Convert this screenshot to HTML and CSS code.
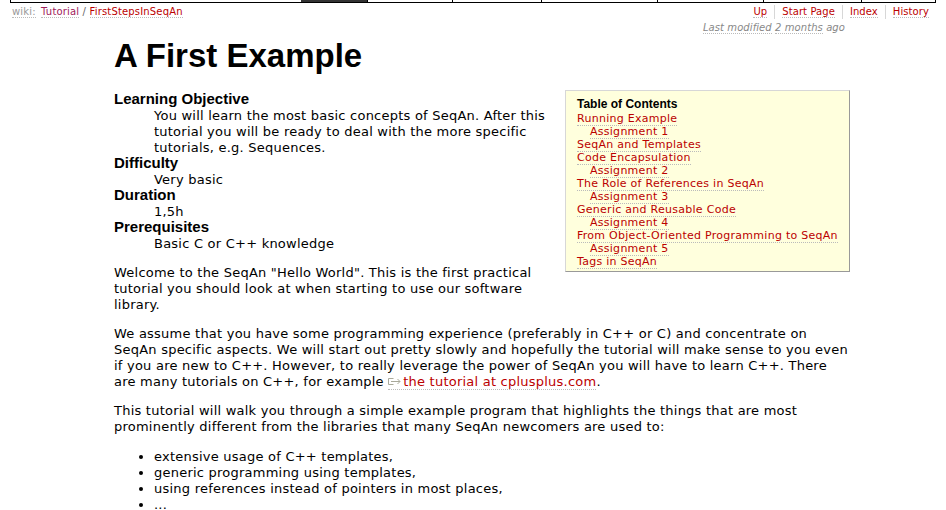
FILE: index.html
```html
<!DOCTYPE html>
<html lang="en">
<head>
    <meta charset="UTF-8">
    <meta name="viewport" content="width=device-width, initial-scale=1.0">
    <title>A First Example</title>
    <link rel="stylesheet" href="styles.css">
</head>
<body>
    <div class="mainnav">
        <span class="tab tab1"></span>
        <span class="tab tab2 active"></span>
        <span class="tab tab3"></span>
        <span class="tab tab4"></span>
        <span class="tab tab5"></span>
        <span class="tab tab6"></span>
        <span class="tab tab7"></span>
    </div>
    <div class="ctxbar">
        <div class="crumbs">
            <a class="wikilabel" href="#">wiki:</a>
            <a href="#" class="purple">Tutorial</a> <span class="slash">/</span>
            <a href="#">FirstStepsInSeqAn</a>
        </div>
        <div class="ctxright">
            <ul class="ctxnav">
                <li><a href="#">Up</a></li>
                <li><a href="#">Start Page</a></li>
                <li><a href="#">Index</a></li>
                <li><a href="#">History</a></li>
            </ul>
            <p class="modified"><a href="#">Last modified</a> <a href="#">2 months</a> ago</p>
        </div>
    </div>
    <div class="content">
        <h1>A First Example</h1>
        <div class="toc">
            <h4>Table of Contents</h4>
            <ol>
                <li><a href="#">Running Example</a></li>
                <li class="sub"><a href="#">Assignment 1</a></li>
                <li><a href="#">SeqAn and Templates</a></li>
                <li><a href="#">Code Encapsulation</a></li>
                <li class="sub"><a href="#">Assignment 2</a></li>
                <li><a href="#">The Role of References in SeqAn</a></li>
                <li class="sub"><a href="#">Assignment 3</a></li>
                <li><a href="#">Generic and Reusable Code</a></li>
                <li class="sub"><a href="#">Assignment 4</a></li>
                <li><a href="#">From Object-Oriented Programming to SeqAn</a></li>
                <li class="sub"><a href="#">Assignment 5</a></li>
                <li><a href="#">Tags in SeqAn</a></li>
            </ol>
        </div>
        <dl>
            <dt>Learning Objective</dt>
            <dd>You will learn the most basic concepts of SeqAn. After this tutorial you will be ready to deal with the more specific tutorials, e.g. Sequences.</dd>
            <dt>Difficulty</dt>
            <dd>Very basic</dd>
            <dt>Duration</dt>
            <dd>1,5h</dd>
            <dt>Prerequisites</dt>
            <dd>Basic C or C++ knowledge</dd>
        </dl>
        <p>Welcome to the SeqAn "Hello World". This is the first practical tutorial you should look at when starting to use our software library.</p>
        <p>We assume that you have some programming experience (preferably in C++ or C) and concentrate on SeqAn specific aspects. We will start out pretty slowly and hopefully the tutorial will make sense to you even if you are new to C++. However, to really leverage the power of SeqAn you will have to learn C++. There are many tutorials on C++, for example <a class="ext" href="#"><svg class="exticon" width="14" height="9" viewBox="0 0 14 9"><path d="M5.500 1.500H.5v6h5M3 4.500h9M9.500 2l2.500 2.500L9.500 7" fill="none" stroke="#a9a99a"/></svg>the tutorial at cplusplus.com</a>.</p>
        <p>This tutorial will walk you through a simple example program that highlights the things that are most prominently different from the libraries that many SeqAn newcomers are used to:</p>
        <ul class="points">
            <li>extensive usage of C++ templates,</li>
            <li>generic programming using templates,</li>
            <li>using references instead of pointers in most places,</li>
            <li>...</li>
        </ul>
    </div>
</body>
</html>
```

FILE: styles.css
```css
html {
    overflow: hidden;
}
body {
    font-family: "DejaVu Sans", Verdana, sans-serif;
    font-size: 13px;
    letter-spacing: 0.23px;
    line-height: 16px;
    color: #000;
    background-color: #fff;
    margin: 0;
}
a {
    color: #b00;
    text-decoration: none;
    border-bottom: 1px dotted #bbb;
}
.mainnav {
    display: flex;
    height: 2px;
    margin: 0 10px;
    border-left: 1px solid #000;
    border-right: 1px solid #000;
    border-bottom: 1px solid #000;
}
.tab {
    border-right: 1px solid #000;
}
.tab1 { width: 290px; border-right: 0; }
.tab2 { width: 66px; background-color: #333; }
.tab3 { width: 84px; }
.tab4 { width: 88px; }
.tab5 { width: 115px; }
.tab6 { width: 105px; }
.tab7 { width: 97px; }
.ctxbar {
    display: flex;
    justify-content: space-between;
    margin: 0 17px 0 12px;
    font-size: 10px;
    letter-spacing: 0.17px;
    line-height: 14px;
}
.crumbs {
    padding-top: 2px;
}
.wikilabel {
    color: #999;
    margin-right: 2px;
}
.purple {
    color: #a0205a;
}
.slash {
    color: #666;
}
.ctxright {
    text-align: right;
    letter-spacing: 0.08px;
}
.ctxnav {
    display: flex;
    justify-content: flex-end;
    list-style: none;
    margin: 0;
    padding: 2px 0 0;
}
.ctxnav li {
    padding: 0 7px;
    border-left: 1px solid #d7d7d7;
}
.ctxnav li:first-child {
    border-left: 0;
}
.ctxnav li:last-child {
    padding-right: 0;
}
.modified {
    margin: 2px 84px 0 0;
    color: #888;
    font-style: italic;
    white-space: nowrap;
}
.modified a {
    color: #888;
}
.content {
    margin: 0 95px 0 114px;
}
h1 {
    font-family: "Liberation Sans", Arial, sans-serif;
    font-size: 33px;
    letter-spacing: 0;
    line-height: 38px;
    font-weight: bold;
    margin: 0;
    padding-top: 2px;
}
.toc {
    float: right;
    width: 285px;
    height: 182px;
    box-sizing: border-box;
    margin: 15px 1px 16px 12px;
    padding: 6px 11px;
    background-color: #ffffdd;
    border: 1px solid #d7d7d7;
    border-right-color: #999;
    border-bottom-color: #999;
    font-size: 11px;
    letter-spacing: 0.27px;
    line-height: 13px;
}
.toc h4 {
    font-family: "Liberation Sans", Arial, sans-serif;
    font-size: 12px;
    letter-spacing: 0;
    line-height: 15px;
    margin: 0;
}
.toc ol {
    list-style: none;
    margin: 0;
    padding: 0;
}
.toc .sub {
    padding-left: 13px;
}
dl {
    margin: 17px 0 0;
}
dt {
    font-family: "Liberation Sans", Arial, sans-serif;
    font-size: 15px;
    letter-spacing: 0;
    line-height: 14px;
    padding-bottom: 2px;
    font-weight: bold;
}
dd {
    margin: 0 0 0 40px;
}
p {
    margin: 13px 0;
}
.exticon {
    margin-right: 1px;
}
.points {
    margin: 14px 0 0;
    padding-left: 40px;
}
```
